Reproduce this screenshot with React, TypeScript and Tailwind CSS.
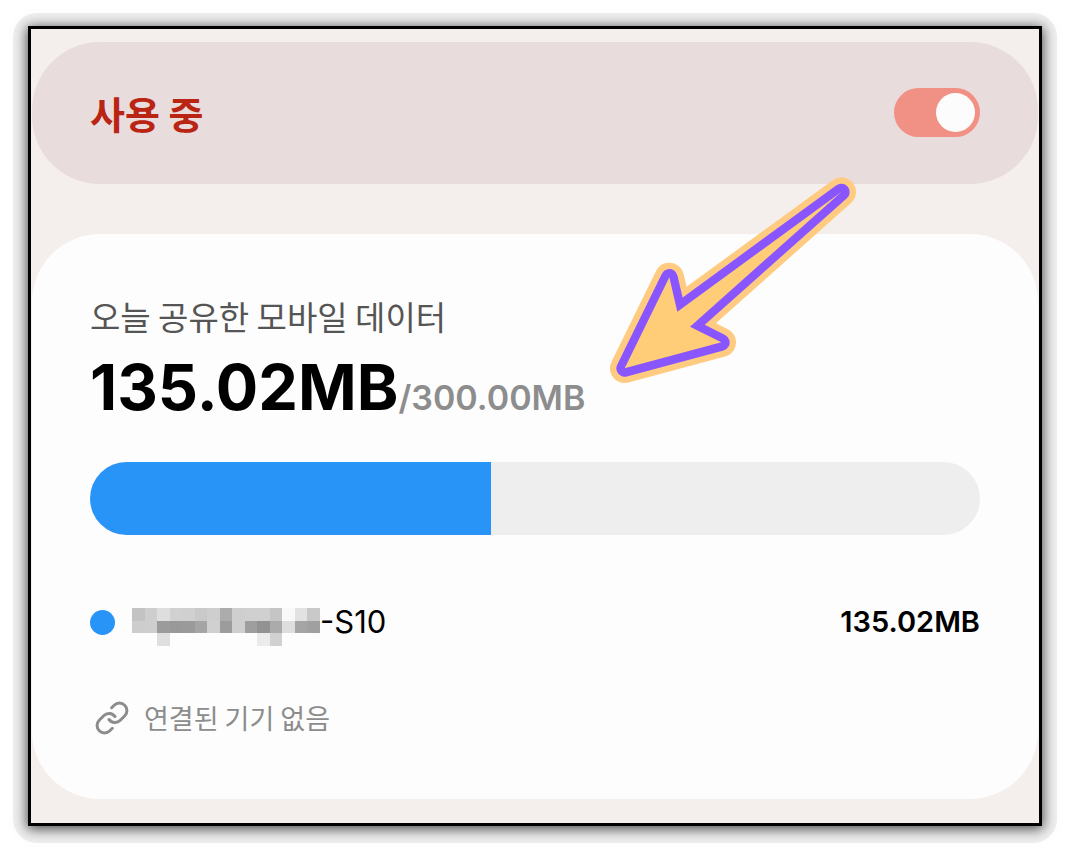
import { useState } from 'react'
import { Link } from 'lucide-react'
import { clsx } from 'clsx'

const USED_MB = 135.02
const LIMIT_MB = 300

// grey levels of the hidden part of the device name, row by row
const MOSAIC: string[][] = [
  ['#c3c3c3', '#cecece', '#dedede', '#d1d1d1', '#d0d0d0', '#c9c9c9', '#cecece', '#acacac', '#cfcfcf', '#d0d0d0', '#d0d0d0', '#c5c5c5', '#f9f9f9', '#e2e2e2', '#c9c9c9'],
  ['#cdcdcd', '#cecece', '#9b9b9b', '#999999', '#9a9a9a', '#a5a5a5', '#d0d0d0', '#9c9c9c', '#cfcfcf', '#9e9e9e', '#929292', '#ababab', '#dedede', '#a5a5a5', '#a0a0a0'],
  ['', '', '#dfdfdf', '', '', '', '', '', '', '', '#ebebeb', '#d1d1d1', '', '', ''],
]

const ARROW = 'M754 96 L262 455 L238 352 L104 625 L394 547 L300 500 Z'

function Mosaic() {
  return (
    <svg viewBox="0 0 15 3" preserveAspectRatio="none" shapeRendering="crispEdges" className="h-[38px] w-[188px] self-end" aria-hidden="true">
      {MOSAIC.map((row, y) =>
        row.map((fill, x) => fill && <rect key={`${x}-${y}`} x={x} y={y} width="1" height="1" fill={fill} />)
      )}
    </svg>
  )
}

function Arrow() {
  return (
    <svg
      viewBox="0 0 870 720"
      className="pointer-events-none absolute right-[159px] top-[131px] w-[290px]"
      strokeLinejoin="round"
      aria-hidden="true"
    >
      <path d={ARROW} fill="none" stroke="#ffcb80" strokeWidth="88" />
      <path d={ARROW} fill="none" stroke="#8855ff" strokeWidth="50" />
      <path d={ARROW} fill="#ffcc78" />
    </svg>
  )
}

export default function App() {
  const [enabled, setEnabled] = useState(true)

  return (
    <div className="min-h-screen bg-white p-[13px] font-['Inter',sans-serif]">
      <div className="rounded-3xl bg-[#efefef] px-[15px] pt-[13px] pb-[17px]">
        <main className="relative border-3 border-black bg-[#f4eeed] px-px pt-[13px] pb-6 shadow-[0_2px_12px_1px_rgba(0,0,0,0.7)]">

          {/* Status */}
          <section className="flex items-center justify-between rounded-[68px] bg-[#e9dcdc] px-[58px] pt-[46px] pb-[47px]">
            <label htmlFor="sharing" className="font-['Noto_Sans_CJK_KR',sans-serif] text-[38px] leading-[49px] font-bold text-[#b92413]">
              사용 중
            </label>
            <span className="relative flex">
              <input
                id="sharing"
                type="checkbox"
                role="switch"
                checked={enabled}
                onChange={e => setEnabled(e.target.checked)}
                className={clsx(
                  'h-[49px] w-[86px] cursor-pointer appearance-none rounded-full transition-colors',
                  enabled ? 'bg-[#f19084]' : 'bg-[#b8adad]'
                )}
              />
              <span
                className={clsx(
                  'pointer-events-none absolute top-[5px] size-[39px] rounded-full bg-[#fcfcfc]',
                  enabled ? 'right-[5px]' : 'left-[5px]'
                )}
              />
            </span>
          </section>

          {/* Usage */}
          <section className="mt-[50px] rounded-[68px] bg-[#fdfdfd] px-[58px] pt-[58px] pb-[61px]">
            <h2 className="font-['Noto_Sans_CJK_KR',sans-serif] text-[33px] leading-[48px] text-[#555]">오늘 공유한 모바일 데이터</h2>
            <p className="flex items-baseline pt-[3px] whitespace-nowrap">
              <span className="text-[63px] leading-[88px] font-bold text-black">{USED_MB.toFixed(2)}MB</span>
              <span className="text-[34px] font-semibold text-[#8d8d8d]">/{LIMIT_MB.toFixed(2)}MB</span>
            </p>

            <div className="mt-[31px] h-[73px] overflow-hidden rounded-full bg-[#eee]">
              <div className="h-full bg-[#2994f7]" style={{ width: `${(USED_MB / LIMIT_MB) * 100}%` }} />
            </div>

            <div className="mt-[63px] flex h-12 items-center justify-between text-black">
              <div className="flex h-full items-center">
                <span className="mr-[17px] size-[25px] rounded-full bg-[#2994f7]" />
                <Mosaic />
                <span className="text-[31px] leading-[44px]">-S10</span>
              </div>
              <span className="text-[29px] leading-[44px] font-semibold">{USED_MB.toFixed(2)}MB</span>
            </div>

            <div className="mt-[52px] flex items-center gap-3.5 pl-1 text-[#8c8c8c]">
              <Link size={36} strokeWidth={2} />
              <p className="font-['Noto_Sans_CJK_KR',sans-serif] text-[27px] leading-10">연결된 기기 없음</p>
            </div>
          </section>

          <Arrow />
        </main>
      </div>
    </div>
  )
}
